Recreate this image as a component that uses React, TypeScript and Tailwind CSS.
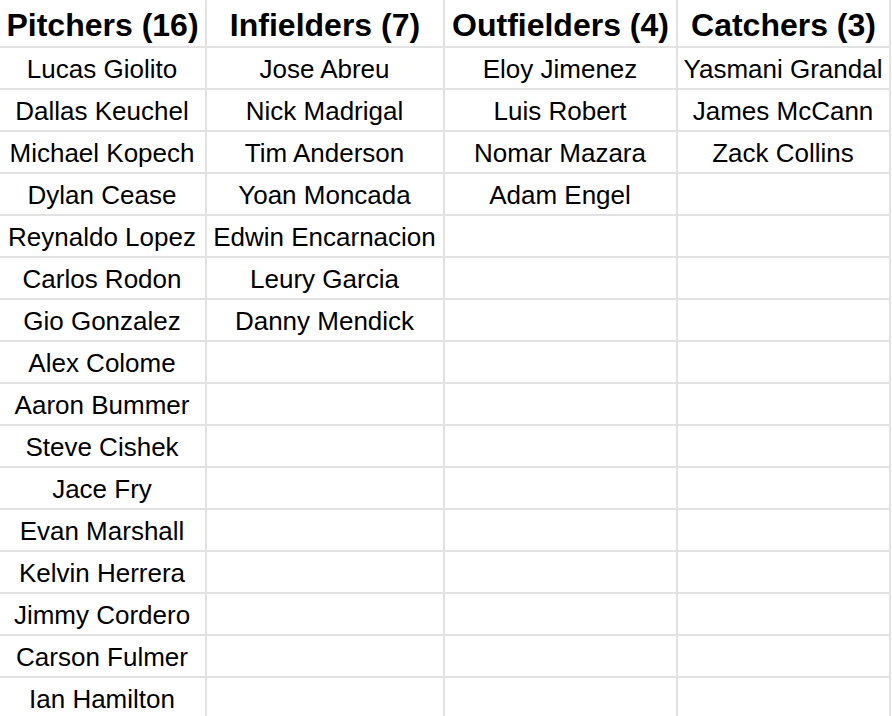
import React from "react";

const cols: { title: string; names: string[] }[] = [
  {
    title: "Pitchers (16)",
    names: [
      "Lucas Giolito",
      "Dallas Keuchel",
      "Michael Kopech",
      "Dylan Cease",
      "Reynaldo Lopez",
      "Carlos Rodon",
      "Gio Gonzalez",
      "Alex Colome",
      "Aaron Bummer",
      "Steve Cishek",
      "Jace Fry",
      "Evan Marshall",
      "Kelvin Herrera",
      "Jimmy Cordero",
      "Carson Fulmer",
      "Ian Hamilton",
    ],
  },
  {
    title: "Infielders (7)",
    names: [
      "Jose Abreu",
      "Nick Madrigal",
      "Tim Anderson",
      "Yoan Moncada",
      "Edwin Encarnacion",
      "Leury Garcia",
      "Danny Mendick",
    ],
  },
  {
    title: "Outfielders (4)",
    names: ["Eloy Jimenez", "Luis Robert", "Nomar Mazara", "Adam Engel"],
  },
  {
    title: "Catchers (3)",
    names: ["Yasmani Grandal", "James McCann", "Zack Collins"],
  },
];

export default function App() {
  const rows = 16;
  return (
    <div
      className="h-[716px] w-[892px] overflow-hidden bg-white text-black"
      style={{ fontFamily: '"Liberation Sans", Arial, sans-serif' }}
    >
      <div className="grid grid-cols-[207px_238px_233px_213px]">
        {cols.map((c) => (
          <div
            key={c.title}
            className="flex h-[48px] items-center justify-center whitespace-nowrap border-b-2 border-r-2 border-[#e2e2e2] pt-[3px] text-[32px] font-bold leading-none"
          >
            {c.title}
          </div>
        ))}
        {Array.from({ length: rows }).map((_, r) =>
          cols.map((c, ci) => (
            <div
              key={`${r}-${ci}`}
              className="flex h-[42px] items-center justify-center whitespace-nowrap border-b-2 border-r-2 border-[#e2e2e2] pt-[2px] pr-[1px] text-[26px] leading-none"
            >
              {c.names[r] ?? ""}
            </div>
          ))
        )}
      </div>
    </div>
  );
}
